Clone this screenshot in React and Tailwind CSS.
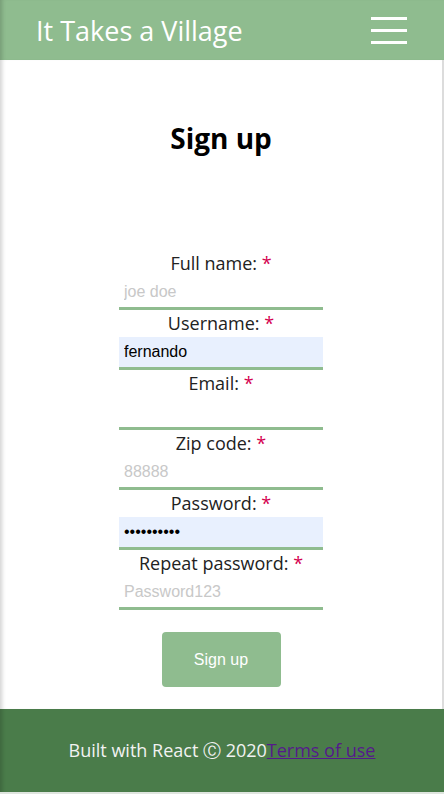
import React, { useState } from 'react';

const edge = 'shadow-[inset_5px_0_4px_-3px_rgba(0,0,0,0.18)]';

const fields = [
  { id: 'fullName', label: 'Full name:', type: 'text', placeholder: 'joe doe', value: '' },
  { id: 'username', label: 'Username:', type: 'text', placeholder: '', value: 'fernando', filled: true },
  { id: 'email', label: 'Email:', type: 'email', placeholder: '', value: '' },
  { id: 'zip', label: 'Zip code:', type: 'text', placeholder: '88888', value: '' },
  { id: 'password', label: 'Password:', type: 'password', placeholder: '', value: 'secret1234', filled: true },
  { id: 'repeat', label: 'Repeat password:', type: 'password', placeholder: 'Password123', value: '' },
];

const Field = ({ field, value, onChange }) => (
  <div className="flex flex-col">
    <label
      htmlFor={field.id}
      className="h-[27px] text-center text-[18px] leading-[27px] text-[#222]"
    >
      {field.label} <span className="text-[#d4004f]">*</span>
    </label>
    <input
      id={field.id}
      type={field.type}
      value={value}
      placeholder={field.placeholder}
      onChange={(e) => onChange(field.id, e.target.value)}
      className={`h-[33px] w-[204px] border-b-[3px] border-[#8fbc8f] px-[5px] text-[16px] text-black outline-none placeholder:text-[#c8c8c8] ${
        field.filled ? 'bg-[#e8f0fe]' : 'bg-white'
      }`}
      style={{ fontFamily: '"Liberation Sans", Arial, sans-serif' }}
    />
  </div>
);

const App = () => {
  const [values, setValues] = useState(
    Object.fromEntries(fields.map((f) => [f.id, f.value]))
  );

  const handleChange = (id, val) => setValues((v) => ({ ...v, [id]: val }));

  return (
    <div
      className="flex min-h-[794px] w-[444px] flex-col bg-white"
      style={{ fontFamily: '"Open Sans", "Noto Sans", sans-serif' }}
    >
      <header className={`flex h-[60px] items-center justify-between bg-[#8fbc8f] pl-[36px] pr-[37px] ${edge}`}>
        <span className="text-[27px] leading-none text-white">It Takes a Village</span>
        <button aria-label="menu" className="flex w-[36px] flex-col gap-[9px] pt-[1px]">
          <span className="h-[3px] w-full bg-white" />
          <span className="h-[3px] w-full bg-white" />
          <span className="h-[3px] w-full bg-white" />
        </button>
      </header>

      <main className={`flex flex-1 flex-col items-center border-r-2 border-[#dcdcdc] ${edge}`}>
        <h1 className="mt-[58px] text-[28px] font-bold leading-[40px] text-black">Sign up</h1>
        <form className="mt-[92px] flex flex-col items-center" onSubmit={(e) => e.preventDefault()}>
          {fields.map((field) => (
            <Field key={field.id} field={field} value={values[field.id]} onChange={handleChange} />
          ))}
          <button
            type="submit"
            className="mt-[22px] h-[55px] w-[119px] rounded-[4px] bg-[#8fbc8f] text-[16px] text-white"
            style={{ fontFamily: '"Liberation Sans", Arial, sans-serif' }}
          >
            Sign up
          </button>
        </form>
        <div className="h-[22px]" />
      </main>

      <footer className={`flex h-[85px] items-center justify-center border-b-2 border-[#dfe5df] bg-[#4a7c4a] text-[18px] text-[#f2f2f2] ${edge}`}>
        <span>Built with React Ⓒ 2020</span>
        <a href="#terms" className="text-[#551a8b] underline">Terms of use</a>
      </footer>
    </div>
  );
};

export default App;
